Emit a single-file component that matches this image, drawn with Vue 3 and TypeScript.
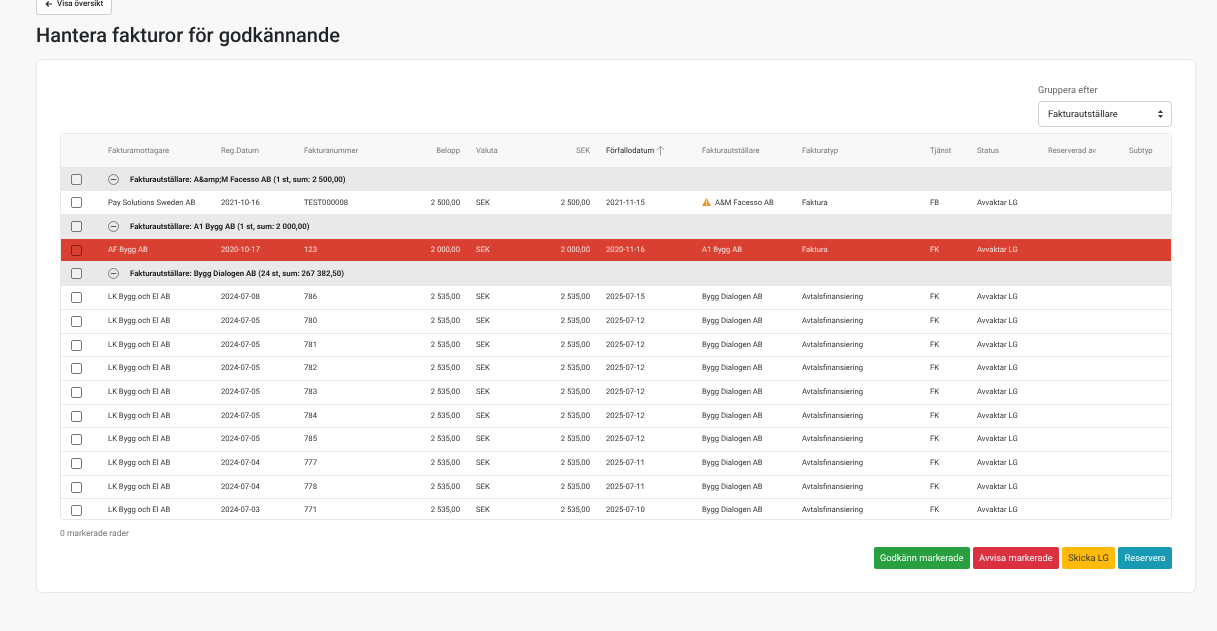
<script setup lang="ts">
interface Row {
  kind: 'group' | 'row'
  label?: string
  to?: string
  reg?: string
  nr?: string
  amount?: string
  due?: string
  issuer?: string
  type?: string
  svc?: string
  warn?: boolean
  red?: boolean
  h?: string
}

const lk = (reg: string, nr: string, due: string): Row => ({
  kind: 'row',
  to: 'LK Bygg och El AB',
  reg,
  nr,
  amount: '2 535,00',
  due,
  issuer: 'Bygg Dialogen AB',
  type: 'Avtalsfinansiering',
  svc: 'FK',
  h: 'std',
})

const rows: Row[] = [
  { kind: 'group', label: 'Fakturautställare: A&amp;M Facesso AB (1 st, sum: 2 500,00)', h: 'g1' },
  { kind: 'row', to: 'Pay Solutions Sweden AB', reg: '2021-10-16', nr: 'TEST000008', amount: '2 500,00', due: '2021-11-15', issuer: 'A&M Facesso AB', type: 'Faktura', svc: 'FB', warn: true, h: 'r1' },
  { kind: 'group', label: 'Fakturautställare: A1 Bygg AB (1 st, sum: 2 000,00)', h: 'g2' },
  { kind: 'row', to: 'AF Bygg AB', reg: '2020-10-17', nr: '123', amount: '2 000,00', due: '2020-11-16', issuer: 'A1 Bygg AB', type: 'Faktura', svc: 'FK', red: true, h: 'r2' },
  { kind: 'group', label: 'Fakturautställare: Bygg Dialogen AB (24 st, sum: 267 382,50)', h: 'g2' },
  lk('2024-07-08', '786', '2025-07-15'),
  lk('2024-07-05', '780', '2025-07-12'),
  lk('2024-07-05', '781', '2025-07-12'),
  lk('2024-07-05', '782', '2025-07-12'),
  lk('2024-07-05', '783', '2025-07-12'),
  lk('2024-07-05', '784', '2025-07-12'),
  lk('2024-07-05', '785', '2025-07-12'),
  lk('2024-07-04', '777', '2025-07-11'),
  lk('2024-07-04', '778', '2025-07-11'),
  lk('2024-07-03', '771', '2025-07-10'),
]

const widths = [39, 113, 83, 104, 68, 62, 68, 96, 100, 128, 47, 71, 81, 50]
</script>

<template>
  <main class="page">
    <button class="back" type="button">
      <svg width="8" height="8" viewBox="0 0 16 16" aria-hidden="true">
        <path d="M14 8H3M7.5 3 2.5 8l5 5" fill="none" stroke="#212529" stroke-width="2.2" />
      </svg>
      Visa översikt
    </button>
    <h1>Hantera fakturor för godkännande</h1>

    <section class="card">
      <div class="filter">
        <label class="filter-label">Gruppera efter</label>
        <div class="select">
          <span>Fakturautställare</span>
          <svg width="5" height="8" viewBox="0 0 5 8" aria-hidden="true">
            <path d="M2.5 0 5 3H0zM2.5 8 0 5h5z" fill="#343a40" />
          </svg>
        </div>
      </div>

      <div class="table-wrap">
        <table>
          <colgroup>
            <col v-for="(w, i) in widths" :key="i" :style="{ width: w + 'px' }" />
          </colgroup>
          <thead>
            <tr>
              <th></th>
              <th>Fakturamottagare</th>
              <th>Reg.Datum</th>
              <th>Fakturanummer</th>
              <th class="num">Belopp</th>
              <th>Valuta</th>
              <th class="num">SEK</th>
              <th class="sorted">
                Förfallodatum
                <svg width="11" height="11" viewBox="0 0 16 16" aria-hidden="true">
                  <path d="M8 15V2M2.500 7.500 8 2l5.500 5.500" fill="none" stroke="#8a8a8a" stroke-width="1.200" />
                </svg>
              </th>
              <th>Fakturautställare</th>
              <th>Fakturatyp</th>
              <th>Tjänst</th>
              <th>Status</th>
              <th>Reserverad av</th>
              <th>Subtyp</th>
            </tr>
          </thead>
          <tbody>
            <template v-for="(r, i) in rows" :key="i">
              <tr v-if="r.kind === 'group'" class="group" :class="r.h">
                <td><span class="check"></span></td>
                <td colspan="13">
                  <div class="group-cell">
                    <svg width="11" height="11" viewBox="0 0 11 11" aria-hidden="true">
                      <circle cx="5.500" cy="5.500" r="5" fill="none" stroke="#555" stroke-width=".7" />
                      <path d="M2.800 5.500h5.400" stroke="#333" stroke-width=".8" />
                    </svg>
                    <strong>{{ r.label }}</strong>
                  </div>
                </td>
              </tr>
              <tr v-else :class="[r.h, { red: r.red }]">
                <td><span class="check"></span></td>
                <td>{{ r.to }}</td>
                <td>{{ r.reg }}</td>
                <td>{{ r.nr }}</td>
                <td class="num">{{ r.amount }}</td>
                <td>SEK</td>
                <td class="num">{{ r.amount }}</td>
                <td>{{ r.due }}</td>
                <td>
                  <svg v-if="r.warn" class="warn" width="9" height="8" viewBox="0 0 18 16" aria-hidden="true">
                    <path d="M9 0 18 16H0z" fill="#f0921e" />
                    <path d="M9 5.500v5M9 12v2" stroke="#fff" stroke-width="1.800" />
                  </svg>
                  {{ r.issuer }}
                </td>
                <td>{{ r.type }}</td>
                <td>{{ r.svc }}</td>
                <td>Avvaktar LG</td>
                <td></td>
                <td></td>
              </tr>
            </template>
          </tbody>
        </table>
      </div>

      <p class="selected">0 markerade rader</p>

      <div class="actions">
        <button class="btn green" type="button">Godkänn markerade</button>
        <button class="btn crimson" type="button">Avvisa markerade</button>
        <button class="btn amber" type="button">Skicka LG</button>
        <button class="btn teal" type="button">Reservera</button>
      </div>
    </section>
  </main>
</template>

<style scoped>
.page {
  margin-top: -8px;
  padding: 0 21px 0 36px;
  font-family: Roboto, "Liberation Sans", sans-serif;
  color: #212529;
  text-rendering: geometricPrecision;
  will-change: transform;
}
.back {
  display: flex;
  align-items: center;
  gap: 4px;
  height: 23px;
  padding: 0 8px;
  background: #fff;
  border: 1px solid #ced0d2;
  border-radius: 3px;
  font: 500 8px Roboto, sans-serif;
  color: #212529;
  text-rendering: geometricPrecision;
}
h1 {
  margin: 5px 0 9px;
  font-size: 20px;
  line-height: 30px;
  font-weight: 500;
  color: #212529;
}
.card {
  height: 534px;
  box-sizing: border-box;
  padding: 21px 23px 0;
  background: #fff;
  border: 1px solid #e9e9e9;
  border-radius: 6px;
  box-shadow: 0 1px 2px rgba(0, 0, 0, 0.06);
}
.filter {
  display: flex;
  flex-direction: column;
  align-items: flex-end;
}
.filter-label {
  align-self: flex-end;
  width: 134px;
  font-size: 9.300px;
  line-height: 20px;
  color: #666;
}
.select {
  display: flex;
  align-items: center;
  justify-content: space-between;
  width: 134px;
  height: 26px;
  box-sizing: border-box;
  padding: 0 8.500px 0 9px;
  background: #fff;
  border: 1px solid #ced0d2;
  border-radius: 4px;
  font-size: 9.330px;
  color: #212529;
}
.table-wrap {
  margin-top: 6px;
  height: 387px;
  box-sizing: border-box;
  overflow: hidden;
  border: 1px solid #e8e8e8;
  border-radius: 3px;
}
table {
  width: 1110px;
  table-layout: fixed;
  border-collapse: collapse;
  font-size: 7.700px;
}
th,
td {
  padding: 0 8px;
  white-space: nowrap;
  text-align: left;
  vertical-align: middle;
}
th {
  height: 33px;
  background: #f8f8f8;
  font-weight: 400;
  color: #767676;
}
th.sorted {
  color: #212529;
  display: flex;
  align-items: center;
  gap: 1px;
  overflow: visible;
}
.num {
  text-align: right;
}
td {
  color: #333;
  background: #fff;
}
td:first-child,
th:first-child {
  padding: 0 0 0 10px;
}
.check {
  display: block;
  width: 9px;
  height: 9px;
  background: #fff;
  border: 1px solid #777;
  border-radius: 2px;
}
.std td {
  height: 23.670px;
  box-sizing: border-box;
  padding-bottom: 2px;
  border-bottom: 1px solid #e8e8e8;
}
.std td:first-child {
  padding-bottom: 0;
}
.r1 td {
  height: 23px;
  box-sizing: border-box;
}
.r2 td {
  height: 22px;
  box-sizing: border-box;
  padding-bottom: 1px;
}
.r2 td:first-child {
  padding-bottom: 0;
}
.g1 td {
  height: 24px;
  box-sizing: border-box;
}
.g2 td {
  height: 25px;
  box-sizing: border-box;
}
.group td {
  background: #e9e9e9;
}
.group .check {
  background: #f1f1f1;
}
.group-cell {
  display: flex;
  align-items: center;
  gap: 11px;
}
.group-cell strong {
  font-size: 7.800px;
  font-weight: 700;
  color: #1f1f1f;
}
.red td {
  background: #d94032;
  color: #fbe4e1;
}
.red .check {
  background: #d94032;
  border-color: #7c2219;
}
.warn {
  margin-right: 2px;
  vertical-align: -1px;
}
.selected {
  margin: 8px 0 0;
  font-size: 8.500px;
  line-height: 12px;
  color: #777;
}
.actions {
  display: flex;
  justify-content: flex-end;
  gap: 3px;
  margin-top: 7px;
}
.btn {
  height: 22px;
  padding: 0 6.300px;
  border: 0;
  border-radius: 2px;
  font: 400 9.330px Roboto, sans-serif;
  color: #fff;
  text-rendering: geometricPrecision;
}
.green {
  background: #28a03f;
}
.crimson {
  background: #da3040;
}
.amber {
  background: #ffbb0c;
  color: #3a3a2a;
}
.teal {
  background: #189ab3;
}
</style>

<style>
html,
body {
  margin: 0;
  background: #f8f8f8;
  overflow: hidden;
}
</style>
